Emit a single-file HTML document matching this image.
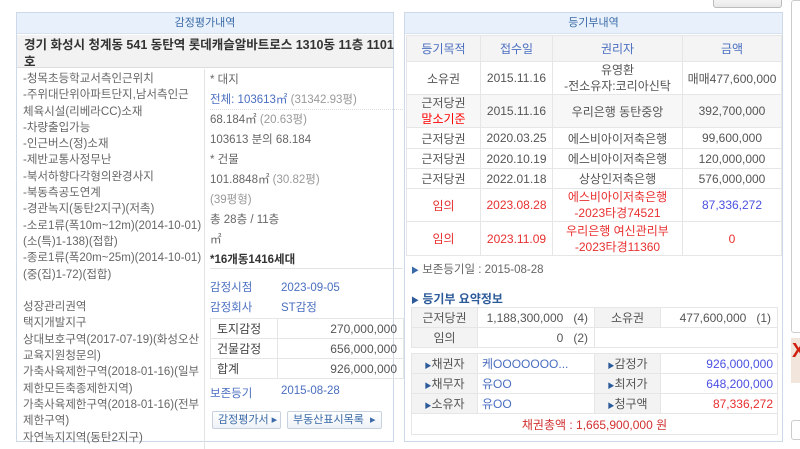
<!DOCTYPE html>
<html><head><meta charset="utf-8"><style>
*{margin:0;padding:0;box-sizing:border-box}
body{width:800px;height:434px;overflow:hidden;background:#fff;font-family:"Liberation Sans","Noto Sans CJK KR",sans-serif;font-size:12px;color:#555;position:relative}
.a{position:absolute;white-space:nowrap}
.panel{position:absolute;border:1px solid #cdd9e8;background:#fff}
.hd{position:absolute;left:0;right:0;top:0;height:21px;background:#e8f1fb;border-bottom:1px solid #d8e2ee;color:#3a6aa8;text-align:center;line-height:21px;font-size:11px}
table{border-collapse:collapse;position:absolute}
td{border:1px solid #e6e6e6;text-align:center;font-size:12px;color:#555}
.blue{color:#4a6ec0}
.red{color:#e83030}
.lbl{background:#f3f3f3}
</style></head><body>
<div class="panel" style="left:16px;top:12px;width:378px;height:430px">
 <div class="hd">감정평가내역</div>
 <div class="a" style="left:0;right:0;top:22px;height:33px;background:#f2f2f2;border-bottom:1px solid #ddd"></div>
 <div class="a" style="left:7px;top:24px;font-size:12.5px;color:#333;font-weight:bold;line-height:17px">경기 화성시 청계동 541 동탄역 롯데캐슬알바트로스 1310동 11층 1101<br>호</div>
 <div class="a" style="left:187px;top:56px;width:1px;height:380px;background:#e3e3e3"></div>
 <div class="a" style="left:6px;top:58px;line-height:16.3px;font-size:11.5px;color:#666">-청목초등학교서측인근위치<br>-주위대단위아파트단지,남서측인근<br>체육시설(리베라CC)소재<br>-차량출입가능<br>-인근버스(정)소재<br>-제반교통사정무난<br>-북서하향다각형의완경사지<br>-북동측공도연계<br>-경관녹지(동탄2지구)(저촉)<br>-소로1류(폭10m~12m)(2014-10-01)<br>(소(특)1-138)(접합)<br>-종로1류(폭20m~25m)(2014-10-01)<br>(중(집)1-72)(접합)<br><br>성장관리권역<br>택지개발지구<br>상대보호구역(2017-07-19)(화성오산<br>교육지원청문의)<br>가축사육제한구역(2018-01-16)(일부<br>제한모든축종제한지역)<br>가축사육제한구역(2018-01-16)(전부<br>제한구역)<br>자연녹지지역(동탄2지구)</div>
 <div class="a" style="left:193px;top:57px;line-height:20px;font-size:11.5px;color:#666">* 대지<br><span class="blue">전체: 103613㎡</span> <span style="color:#999">(31342.93평)</span><br>68.184㎡ <span style="color:#999">(20.63평)</span><br>103613 분의 68.184<br>* 건물<br>101.8848㎡ <span style="color:#999">(30.82평)</span><br><span style="color:#999">(39평형)</span><br>총 28층 / 11층<br>㎡<br><b style="color:#333">*16개동1416세대</b></div>
 <div class="a" style="left:193px;top:96px;width:193px;border-top:1px dotted #ddd"></div>
 <div class="a" style="left:193px;top:255px;width:193px;border-top:1px solid #e3e3e3"></div>
 <div class="a blue" style="left:193px;top:265px;line-height:20px;font-size:11.5px">감정시점<br>감정회사</div>
 <div class="a blue" style="left:264px;top:265px;line-height:20px;font-size:11.5px">2023-09-05<br>ST감정</div>
 <table style="left:193px;top:305px;width:194px">
  <tr style="height:20px"><td style="text-align:left;padding-left:6px;width:67px;color:#444">토지감정</td><td style="text-align:right;padding-right:6px">270,000,000</td></tr>
  <tr style="height:20px"><td style="text-align:left;padding-left:6px;color:#444">건물감정</td><td style="text-align:right;padding-right:6px">656,000,000</td></tr>
  <tr style="height:20px"><td style="text-align:left;padding-left:6px;color:#444">합계</td><td style="text-align:right;padding-right:6px">926,000,000</td></tr>
 </table>
 <div class="a blue" style="left:193px;top:372px;font-size:11.5px">보존등기</div>
 <div class="a blue" style="left:264px;top:372px;font-size:11.5px">2015-08-28</div>
 <div class="a" style="left:195px;top:398px;width:69px;height:18px;border:1px solid #c8d2de;border-radius:2px;background:linear-gradient(#fff,#eef2f7);color:#3a6aa8;font-size:11px;line-height:16px;padding-left:5px">감정평가서 ▸</div>
 <div class="a" style="left:270px;top:398px;width:95px;height:18px;border:1px solid #c8d2de;border-radius:2px;background:linear-gradient(#fff,#eef2f7);color:#3a6aa8;font-size:11px;line-height:16px;padding-left:5px">부동산표시목록 &nbsp;▸</div>
</div>
<div class="a" style="left:713px;top:-8px;width:69px;height:16px;border:1px solid #bbb;border-radius:3px;background:linear-gradient(#fff,#e8e8e8)"></div>
<div class="panel" style="left:404px;top:12px;width:379px;height:430px">
 <div class="hd">등기부내역</div>
 <table style="left:1px;top:22px;width:376px">
  <tr style="height:26px;background:#f4f4f4"><td class="blue" style="width:74px">등기목적</td><td class="blue" style="width:72px">접수일</td><td class="blue" style="width:130px">권리자</td><td class="blue">금액</td></tr>
  <tr style="height:33px"><td>소유권</td><td>2015.11.16</td><td style="line-height:16px">유영환<br>-전소유자:코리아신탁</td><td>매매477,600,000</td></tr>
  <tr style="height:33px;background:#f7f7f7"><td style="line-height:16px">근저당권<br><span style="color:#f00">말소기준</span></td><td>2015.11.16</td><td>우리은행 동탄중앙</td><td>392,700,000</td></tr>
  <tr style="height:21px"><td>근저당권</td><td>2020.03.25</td><td>에스비아이저축은행</td><td>99,600,000</td></tr>
  <tr style="height:20px"><td>근저당권</td><td>2020.10.19</td><td>에스비아이저축은행</td><td>120,000,000</td></tr>
  <tr style="height:20px"><td>근저당권</td><td>2022.01.18</td><td>상상인저축은행</td><td>576,000,000</td></tr>
  <tr style="height:33px"><td class="red">임의</td><td class="red">2023.08.28</td><td class="red" style="line-height:16px">에스비아이저축은행<br>-2023타경74521</td><td style="color:#4a50e0">87,336,272</td></tr>
  <tr style="height:34px"><td class="red">임의</td><td class="red">2023.11.09</td><td class="red" style="line-height:16px">우리은행 여신관리부<br>-2023타경11360</td><td class="red">0</td></tr>
 </table>
 <div class="a" style="left:6px;top:248px;font-size:11.5px;color:#666"><span style="color:#3a6aa8;font-size:8px">▶</span> 보존등기일 : 2015-08-28</div>
 <div class="a" style="left:6px;top:277px;font-size:12px;color:#2d5b9a;font-weight:bold"><span style="font-size:8px">▶</span> 등기부 요약정보</div>
 <table style="left:6px;top:294px;width:367px">
  <tr style="height:20px"><td class="lbl" style="width:66px">근저당권</td><td style="text-align:right;padding-right:6px;width:117px">1,188,300,000 &nbsp;&nbsp;(4)</td><td class="lbl" style="width:66px">소유권</td><td style="text-align:right;padding-right:6px">477,600,000 &nbsp;&nbsp;(1)</td></tr>
  <tr style="height:20px"><td class="lbl">임의</td><td style="text-align:right;padding-right:6px">0 &nbsp;&nbsp;(2)</td><td colspan="2"></td></tr>
 </table>
 <table style="left:6px;top:340px;width:367px">
  <tr style="height:20px"><td class="lbl" style="width:66px"><span style="font-size:7px;color:#2d5b9a">▶</span>채권자</td><td class="blue" style="text-align:left;padding-left:4px;width:117px">케OOOOOOO...</td><td class="lbl" style="width:66px"><span style="font-size:7px;color:#2d5b9a">▶</span>감정가</td><td style="text-align:right;padding-right:4px;color:#4a50e0">926,000,000</td></tr>
  <tr style="height:20px"><td class="lbl"><span style="font-size:7px;color:#2d5b9a">▶</span>채무자</td><td class="blue" style="text-align:left;padding-left:4px">유OO</td><td class="lbl"><span style="font-size:7px;color:#2d5b9a">▶</span>최저가</td><td style="text-align:right;padding-right:4px;color:#4a50e0">648,200,000</td></tr>
  <tr style="height:20px"><td class="lbl"><span style="font-size:7px;color:#2d5b9a">▶</span>소유자</td><td class="blue" style="text-align:left;padding-left:4px">유OO</td><td class="lbl"><span style="font-size:7px;color:#2d5b9a">▶</span>청구액</td><td style="text-align:right;padding-right:4px" class="red">87,336,272</td></tr>
  <tr style="height:21px"><td colspan="4" style="color:#d03030">채권총액 : 1,665,900,000 원</td></tr>
 </table>
</div>
<div class="a" style="left:791px;top:0;width:12px;height:333px;border:1px solid #ccc;border-radius:3px"></div>
<div class="a" style="left:791px;top:338px;width:12px;height:45px;background:#f2e6dc"></div>
<div class="a" style="left:792px;top:340px;color:#d02010;font-weight:bold;font-size:20px">X</div>
<div class="a" style="left:791px;top:420px;width:12px;height:20px;border:1px solid #ccc;border-radius:3px"></div>
</body></html>
